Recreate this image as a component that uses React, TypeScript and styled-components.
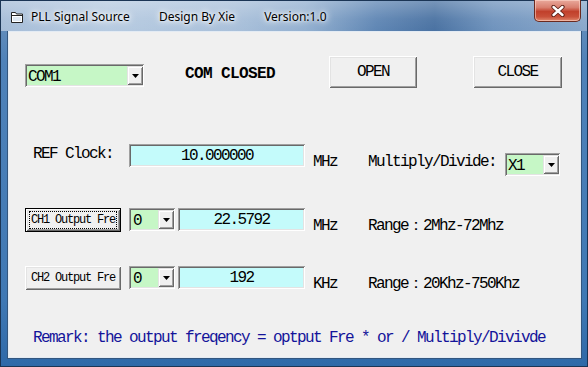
import React from "react";
import styled, { createGlobalStyle } from "styled-components";

const Global = createGlobalStyle`
  html, body { margin: 0; padding: 0; background: #fff; }
  body { width: 588px; height: 367px; overflow: hidden; }
  * { box-sizing: border-box; }
`;

const MONO = `"Liberation Mono", "DejaVu Sans Mono", monospace`;
const FS = 16;
const LS = -1.6;

const Window = styled.div`
  width: 588px;
  height: 367px;
  display: flex;
  flex-direction: column;
  border: 1px solid #1b3555;
  background: linear-gradient(to bottom, #6f93bb 0px, #4f82b9 60px, #3f78b4 300px, #2f69a8 100%);
`;

const TitleBar = styled.div`
  height: 30px;
  display: flex;
  align-items: center;
  position: relative;
  padding-left: 10px;
  background:
    linear-gradient(to bottom, rgba(255,255,255,0.25) 0%, rgba(255,255,255,0.05) 60%, rgba(255,255,255,0) 100%),
    linear-gradient(to right, #a6bdd8 0%, #b7cbe1 18%, #a9c0da 40%, #93b0d0 52%, #5f86b4 64%, #4a72a2 74%, #6f93bd 84%, #8aa8cb 100%);
`;

const AppIcon = styled.svg`
  width: 12px;
  height: 11px;
  margin-top: 2px;
  flex: none;
`;

const TitleTexts = styled.div`
  display: flex;
  gap: 29px;
  margin-left: 8px;
  margin-top: 1px;
  font-family: "Noto Sans", "Open Sans", sans-serif;
  font-size: 12px;
  color: #000;
  text-shadow: 0 0 6px #fff, 0 0 10px #fff, 0 0 3px rgba(255,255,255,0.9);
  white-space: pre;
`;

const CloseBtn = styled.div`
  position: absolute;
  right: 6px;
  top: -1px;
  width: 47px;
  height: 22px;
  border: 1px solid #6a2a20;
  border-top: none;
  border-radius: 0 0 5px 5px;
  background: linear-gradient(to bottom, #e9a99c 0%, #d98070 35%, #c1402b 55%, #c9513a 80%, #e08a6f 100%);
  box-shadow: inset 0 0 0 1px rgba(255,220,210,0.55);
  display: flex;
  align-items: center;
  justify-content: center;
`;

const Client = styled.div`
  flex: 1;
  margin: 0 6px 8px 7px;
  background: #f0f0f0;
  border: 1px solid #e3ebf4;
  box-shadow: 0 0 0 1px #33567e;
  display: flex;
  flex-direction: column;
  padding-left: 16px;
`;

const Row = styled.div<{ $gap: number; $cols: string }>`
  margin-top: ${(p) => p.$gap}px;
  display: grid;
  grid-template-columns: ${(p) => p.$cols};
  align-items: start;
`;

const Cell = styled.div<{ $top?: number; $pad?: number }>`
  margin-top: ${(p) => p.$top ?? 0}px;
  padding-left: ${(p) => p.$pad ?? 0}px;
  display: flex;
  gap: 3px;
`;

const Label = styled.span<{ $bold?: boolean; $color?: string }>`
  font-family: ${MONO};
  font-size: ${FS}px;
  letter-spacing: ${(p) => (p.$bold ? -0.6 : LS)}px;
  line-height: 16px;
  font-weight: ${(p) => (p.$bold ? 700 : 400)};
  color: ${(p) => p.$color ?? "#000"};
  white-space: pre;
`;

const Wide = styled.span`
  display: inline-block;
  width: 15px;
  text-align: center;
  letter-spacing: 0;
`;

const Button = styled.div<{ $w: number; $h: number; $small?: boolean; $focus?: boolean }>`
  width: ${(p) => p.$w}px;
  height: ${(p) => p.$h}px;
  background: #f0f0f0;
  display: flex;
  align-items: center;
  justify-content: center;
  position: relative;
  font-family: ${MONO};
  font-size: ${(p) => (p.$small ? 12 : FS)}px;
  letter-spacing: ${(p) => (p.$small ? -1.2 : LS)}px;
  color: #000;
  white-space: pre;
  border: ${(p) => (p.$focus ? "1px solid #000" : "none")};
  box-shadow: inset 1px 1px #ffffff, inset -1px -1px #696969, inset 2px 2px #e3e3e3, inset -2px -2px #a0a0a0;
`;

const FocusRing = styled.div`
  position: absolute;
  inset: 2px 3px 2px 3px;
  border: 1px dotted #000;
  pointer-events: none;
`;

const Field = styled.div<{ $w: number }>`
  width: ${(p) => p.$w}px;
  height: 23px;
  background: #c4fbfb;
  box-shadow: inset 1px 1px #a0a0a0, inset -1px -1px #ffffff, inset 2px 2px #696969, inset -2px -2px #e3e3e3;
  display: flex;
  align-items: center;
  justify-content: center;
  padding-top: 1px;
  font-family: ${MONO};
  font-size: ${FS}px;
  letter-spacing: ${LS}px;
  color: #000;
`;

const Combo = styled.div<{ $w: number }>`
  width: ${(p) => p.$w}px;
  height: 23px;
  padding: 2px 1px 2px 2px;
  box-shadow: inset 1px 1px #a0a0a0, inset -1px -1px #ffffff, inset 2px 2px #696969, inset -2px -2px #e3e3e3;
  background: #c6f7c6;
  display: flex;
`;

const ComboText = styled.div<{ $pad: number }>`
  flex: 1;
  padding-left: ${(p) => p.$pad}px;
  padding-top: 3px;
  font-family: ${MONO};
  font-size: ${FS}px;
  letter-spacing: ${LS}px;
  line-height: 16px;
  color: #000;
`;

const DropBtn = styled.div`
  width: 16px;
  height: 19px;
  background: #f0f0f0;
  box-shadow: inset 1px 1px #e3e3e3, inset -1px -1px #696969, inset 2px 2px #ffffff, inset -2px -2px #a0a0a0;
  display: flex;
  align-items: center;
  justify-content: center;
`;

const Arrow = () => (
  <svg width="7" height="4" viewBox="0 0 7 4">
    <path d="M0 0h7L3.5 4z" fill="#000" />
  </svg>
);

const ComboBox = ({ w, text, pad }: { w: number; text: string; pad: number }) => (
  <Combo $w={w}>
    <ComboText $pad={pad}>{text}</ComboText>
    <DropBtn>
      <Arrow />
    </DropBtn>
  </Combo>
);

const Remark = styled.div`
  margin-top: 38px;
  padding-left: 8px;
  font-family: ${MONO};
  font-size: ${FS}px;
  letter-spacing: ${LS}px;
  line-height: 16px;
  color: #14149a;
  white-space: pre;
`;

const GRID = "104px 184px 55px 137px auto";

export default function App() {
  return (
    <>
      <Global />
      <Window>
        <TitleBar>
          <AppIcon viewBox="0 0 12 11">
            <path d="M0.5 0.5h4l1 1.5h6v8.5h-11z" fill="#fff" stroke="#222" strokeWidth="1" />
            <path d="M0.5 3.5h11" stroke="#222" strokeWidth="1" />
            <path d="M2 5h8v4h-8z" fill="#dfe8f2" />
          </AppIcon>
          <TitleTexts>
            <span>PLL Signal Source</span>
            <span>Design By Xie</span>
            <span>Version:1.0</span>
          </TitleTexts>
          <CloseBtn>
            <svg width="14" height="12" viewBox="0 0 14 12">
              <path d="M2.5 2l9 8M11.5 2l-9 8" stroke="#5a1e14" strokeWidth="4.2" strokeLinecap="round" />
              <path d="M2.5 2l9 8M11.5 2l-9 8" stroke="#fff" strokeWidth="2.4" strokeLinecap="round" />
            </svg>
          </CloseBtn>
        </TitleBar>
        <Client>
          <Row $gap={24} $cols="160px 144px 144px 89px">
            <Cell $top={8}>
              <ComboBox w={119} text="COM1" pad={1} />
            </Cell>
            <Cell $top={10}>
              <Label $bold>COM CLOSED</Label>
            </Cell>
            <Cell>
              <Button $w={88} $h={32}>OPEN</Button>
            </Cell>
            <Cell>
              <Button $w={89} $h={32}>CLOSE</Button>
            </Cell>
          </Row>

          <Row $gap={56} $cols={GRID}>
            <Cell $top={2} $pad={8}>
              <Label>REF Clock:</Label>
            </Cell>
            <Cell>
              <Field $w={176}>10.000000</Field>
            </Cell>
            <Cell $top={10}>
              <Label>MHz</Label>
            </Cell>
            <Cell $top={10}>
              <Label>Multiply/Divide:</Label>
            </Cell>
            <Cell $top={9}>
              <ComboBox w={55} text="X1" pad={1} />
            </Cell>
          </Row>

          <Row $gap={32} $cols={GRID}>
            <Cell>
              <Button $w={96} $h={24} $small $focus>
                CH1 Output Fre
                <FocusRing />
              </Button>
            </Cell>
            <Cell>
              <ComboBox w={46} text="0" pad={2} />
              <Field $w={127}>22.5792</Field>
            </Cell>
            <Cell $top={10}>
              <Label>MHz</Label>
            </Cell>
            <Cell $top={10}>
              <Label>Range<Wide>：</Wide>2Mhz-72Mhz</Label>
            </Cell>
          </Row>

          <Row $gap={32} $cols={GRID}>
            <Cell>
              <Button $w={96} $h={24} $small>
                CH2 Output Fre
              </Button>
            </Cell>
            <Cell>
              <ComboBox w={46} text="0" pad={2} />
              <Field $w={127}>192</Field>
            </Cell>
            <Cell $top={10}>
              <Label>KHz</Label>
            </Cell>
            <Cell $top={10}>
              <Label>Range<Wide>：</Wide>20Khz-750Khz</Label>
            </Cell>
          </Row>

          <Remark>Remark: the output freqency = optput Fre * or / Multiply/Divivde</Remark>
        </Client>
      </Window>
    </>
  );
}
